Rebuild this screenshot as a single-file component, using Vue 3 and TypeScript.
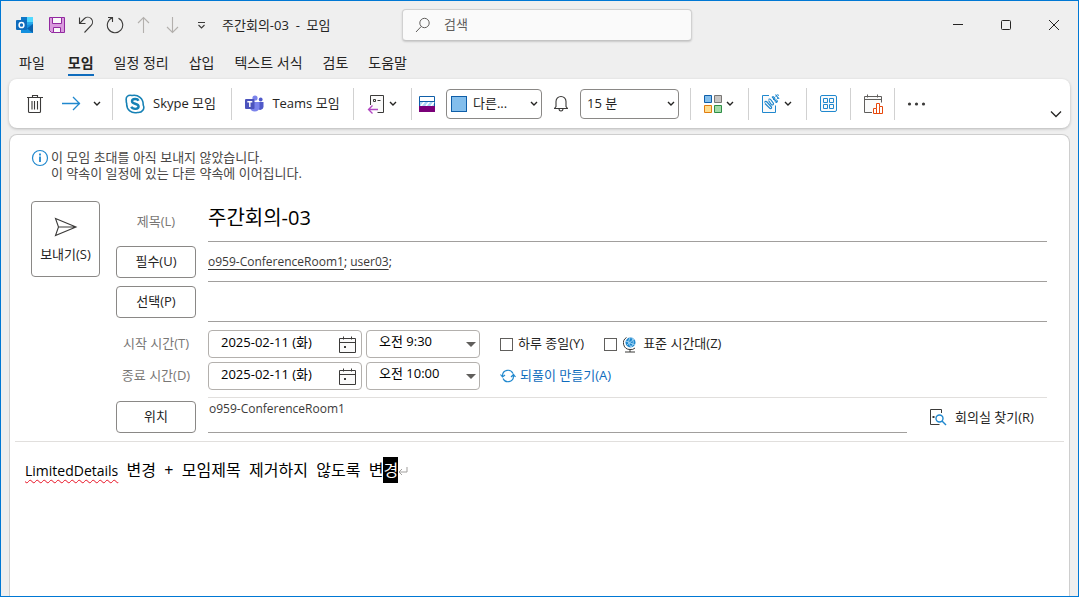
<script setup lang="ts">
import { ref } from 'vue'

const tabs = ['파일', '모임', '일정 정리', '삽입', '텍스트 서식', '검토', '도움말']
const activeTab = ref('모임')
const subject = ref('주간회의-03')
const place = ref('o959-ConferenceRoom1')
const times = ref([
  { id: 'start', label: '시작 시간(T)', date: '2025-02-11 (화)', time: '오전 9:30' },
  { id: 'end', label: '종료 시간(D)', date: '2025-02-11 (화)', time: '오전 10:00' },
])
const attendees = ['o959-ConferenceRoom1', 'user03']
const allDay = ref(false)
const timeZones = ref(false)
</script>

<template>
  <div class="window">
    <header class="titlebar">
      <div class="quick">
        <svg class="logo" width="18" height="18" viewBox="0 0 18 18">
          <path d="M5 1h12v8H5z" fill="#28a8ea" />
          <path d="M11 1h6v5h-6z" fill="#50d9ff" />
          <path d="M5 1h6v4H5z" fill="#0f78c8" />
          <path d="M5 17V9h6l6-1v9z" fill="#1490df" />
          <path d="M17 8v9l-6-4.500z" fill="#0a62ad" />
          <rect x="0" y="4" width="11" height="10" rx="1" fill="#0f6cbd" />
          <ellipse cx="5.500" cy="9" rx="2.400" ry="2.600" fill="none" stroke="#fff" stroke-width="1.500" />
        </svg>
        <button class="q save" aria-label="저장">
          <svg width="18" height="18" viewBox="0 0 18 18">
            <path d="M1.500 1.500h15v15h-13l-2-2z" fill="#d99add" stroke="#9229a0" />
            <path d="M4.500 1.500h9v6h-9z" fill="#fafafa" stroke="#9229a0" />
            <path d="M5.500 16.500v-5h7v5z" fill="#fafafa" stroke="#9229a0" />
          </svg>
        </button>
        <button class="q" aria-label="실행 취소">
          <svg width="18" height="18" viewBox="0 0 18 18" class="line">
            <path d="M2.500 1.500v6h6M2.500 7.500l5-5C9.500.800 12.500.900 14.200 2.700s1.800 4.800 0 6.800L7.500 16.500" />
          </svg>
        </button>
        <button class="q" aria-label="다시 실행">
          <svg width="18" height="18" viewBox="0 0 18 18" class="line">
            <path d="M2 1.500h4.500v4.500M6.500 1.800A7.700 7.700 0 1 0 12.500 2.200" />
          </svg>
        </button>
        <button class="q" aria-label="이전 항목">
          <svg width="18" height="18" viewBox="0 0 18 18" class="line dim"><path d="M8.500 17V1.500M3 7l5.500-5.500L14 7" /></svg>
        </button>
        <button class="q" aria-label="다음 항목">
          <svg width="18" height="18" viewBox="0 0 18 18" class="line dim"><path d="M8.500 1v15.500M3 11l5.500 5.500L14 11" /></svg>
        </button>
        <button class="q" aria-label="도구 모음 사용자 지정">
          <svg width="18" height="18" viewBox="0 0 18 18" class="line"><path d="M5 6.500h7M5.500 9l3 3 3-3" /></svg>
        </button>
        <span class="caption">주간회의-03&nbsp; -&nbsp; 모임</span>
      </div>
      <label class="search">
        <svg width="16" height="16" viewBox="0 0 16 16"><circle cx="9.500" cy="6" r="4.700" /><path d="M6.200 9.500L1 15" /></svg>
        <input type="text" placeholder="검색" aria-label="검색" />
      </label>
      <div class="controls">
        <button aria-label="최소화"><svg width="12" height="12" viewBox="0 0 12 12"><path d="M1 5.500h10" /></svg></button>
        <button aria-label="최대화"><svg width="12" height="12" viewBox="0 0 12 12"><rect x="1.500" y="1.500" width="9" height="9" rx="1" /></svg></button>
        <button aria-label="닫기"><svg width="12" height="12" viewBox="0 0 12 12"><path d="M1 1l10 10M11 1L1 11" /></svg></button>
      </div>
    </header>

    <nav class="tabs">
      <button v-for="t in tabs" :key="t" :class="{ active: t === activeTab }" @click="activeTab = t">{{ t }}</button>
    </nav>

    <section class="ribbon">
      <div class="group first">
        <button aria-label="삭제">
          <svg width="18" height="20" viewBox="0 0 18 20" class="line"><path d="M1 3.500h16M6.500 3.500v-2h5v2M2.500 3.500v14q0 1 1 1h10q1 0 1-1v-14M6 7v8.500M8.500 7v8.500M11.500 7v8.500" /></svg>
        </button>
        <button aria-label="전달" class="forward">
          <svg width="20" height="16" viewBox="0 0 20 16" class="line blue"><path d="M1 7.500h18M12 1l6.500 6.500L12 14" /></svg>
        </button>
        <button aria-label="전달 옵션"><svg class="chev" width="8" height="6" viewBox="0 0 8 6"><path d="M1 1l3 3 3-3" /></svg></button>
      </div>
      <div class="group skype">
        <button class="named">
          <svg width="20" height="20" viewBox="0 0 20 20">
            <path d="M1.300 6.500C.500 3 3.200.300 7 1.500c6-1.300 11.500 3 11.200 9.500 1.800 3.500-.800 8-5.700 7.500C6.500 19.800 1.300 16 1.700 9.500 1.300 8.500 1.200 7.500 1.300 6.500z" fill="#fff" stroke="#1681b5" stroke-width="1.600" />
            <path d="M13.500 6.700C12.500 4.300 7 4.500 7 7.300c0 3.200 6.600 1.700 6.600 5.200 0 3-5.900 3.200-7.300.3" fill="none" stroke="#1681b5" stroke-width="2.400" />
          </svg>
          <span>Skype 모임</span>
        </button>
      </div>
      <div class="group teams">
        <button class="named">
          <svg width="19" height="18" viewBox="0 0 19 18">
            <circle cx="15.700" cy="4.500" r="1.900" fill="#5059c9" />
            <circle cx="10" cy="3" r="2.600" fill="#7b83eb" />
            <path d="M12 7h6.500v5a3.300 3.300 0 0 1-6 1.500z" fill="#5059c9" />
            <path d="M5 7h9.500v5.500a4.800 4.800 0 0 1-9.500 0z" fill="#7b83eb" />
            <rect x="0" y="4" width="9.500" height="10" rx="1" fill="#4b53bc" />
            <path d="M2.300 6.800h5M4.800 6.800V12" stroke="#fff" stroke-width="1.400" />
          </svg>
          <span>Teams 모임</span>
        </button>
      </div>
      <div class="group">
        <button class="menu" aria-label="응답 옵션">
          <svg width="18" height="20" viewBox="0 0 18 20" fill="none">
            <path d="M3.500 11V1.500h13v17h-6" stroke="#3b3a39" fill="#fafafa" />
            <path d="M6.500 5.500h2v2h-2zM10.500 6.500h3" stroke="#3b3a39" />
            <path d="M11 15.500H1.500M5.500 11.500l-4 4 4 4" stroke="#b146c2" stroke-width="1.300" />
          </svg>
          <svg class="chev" width="8" height="6" viewBox="0 0 8 6"><path d="M1 1l3 3 3-3" /></svg>
        </button>
      </div>
      <div class="group options">
        <svg width="16" height="16" viewBox="0 0 16 16">
          <path d="M.500.500h15v10H.500z" fill="#fff" stroke="#0f5ea8" />
          <path d="M1 5h14v5H1z" fill="#a9d8f5" />
          <path d="M2 10l4-5M7 10l4-5M12 10l3-4" stroke="#fff" stroke-width="1.500" />
          <path d="M.500 5.500h15" stroke="#0f5ea8" />
          <path d="M0 10h16v6H0z" fill="#7a0078" />
        </svg>
        <div class="pick busy">
          <span class="swatch"></span>
          <select aria-label="상태"><option>다른...</option></select>
          <svg class="chev" width="8" height="6" viewBox="0 0 8 6"><path d="M1 1l3 3 3-3" /></svg>
        </div>
        <svg width="14" height="18" viewBox="0 0 14 18" class="line bell"><path d="M.500 13.500h13l-1.500-2V6.500a5 5 0 0 0-10 0v5zM5 13.500q0 2.500 2 2.500t2-2.500" /></svg>
        <div class="pick remind">
          <select aria-label="미리 알림"><option>15 분</option></select>
          <svg class="chev" width="8" height="6" viewBox="0 0 8 6"><path d="M1 1l3 3 3-3" /></svg>
        </div>
      </div>
      <div class="group">
        <button class="menu" aria-label="범주">
          <svg width="18" height="18" viewBox="0 0 18 18">
            <path d="M.500.500h7v7h-7z" fill="#83beec" stroke="#0f5ea8" />
            <path d="M10.500.500h7v7h-7z" fill="#c8c6c4" stroke="#797775" />
            <path d="M.500 10.500h7v7h-7z" fill="#ffdd8f" stroke="#e07c10" />
            <path d="M10.500 10.500h7v7h-7z" fill="#a2dba8" stroke="#2f8d46" />
          </svg>
          <svg class="chev" width="8" height="6" viewBox="0 0 8 6"><path d="M1 1l3 3 3-3" /></svg>
        </button>
      </div>
      <div class="group">
        <button class="menu" aria-label="잉크">
          <svg width="19" height="20" viewBox="0 0 19 20" fill="none" stroke="#2088ce">
            <path d="M8 1.500H1.500v17h13v-7" fill="#fafafa" />
            <path d="M3.500 8.500q1-2 2.500-.500l4.500 5q.500 2-1.500 1.500L4 9.500M7.500 5.500q1.200-1.200 2.500.500l2.500 3.500q0 2-2 1.300L7.500 6.500M11 2.500l5 6M14.500.500l3 4" stroke-width="1.200" />
            <path d="M11 4q2-3 3 0 0 2-2 1.500M13.500 7q2.500-2.500 3 0 0 2-2 1.500M14.500 2.500q2.500-3 3.500-1M16 4.500q2-1.500 2 .500" />
          </svg>
          <svg class="chev" width="8" height="6" viewBox="0 0 8 6"><path d="M1 1l3 3 3-3" /></svg>
        </button>
      </div>
      <div class="group small">
        <button aria-label="앱">
          <svg width="18" height="18" viewBox="0 0 18 18" fill="#fafafa" stroke="#2088ce">
            <rect x=".500" y=".500" width="16" height="16" rx="1.500" />
            <path d="M3.500 3.500h4v4h-4zM9.500 3.500h4v4h-4zM3.500 9.500h4v4h-4zM9.500 9.500h4v4h-4z" />
          </svg>
        </button>
      </div>
      <div class="group small">
        <button aria-label="일정 설문">
          <svg width="20" height="20" viewBox="0 0 20 20" fill="none">
            <path d="M9 18.500H1.500v-16h17v6" stroke="#605e5c" fill="#fafafa" />
            <path d="M1.500 5.500h17M4.500.500v3M14.500.500v3" stroke="#605e5c" />
            <path d="M10.500 19.500v-5h3v-5h3v3h3v7zM13.500 14.500v5M16.500 12.500v7" stroke="#e8480c" fill="#fff" />
          </svg>
        </button>
      </div>
      <div class="group small last">
        <button aria-label="기타 명령">
          <svg width="20" height="4" viewBox="0 0 20 4" fill="#3b3a39"><circle cx="2.500" cy="2" r="1.600" /><circle cx="9.500" cy="2" r="1.600" /><circle cx="16.500" cy="2" r="1.600" /></svg>
        </button>
      </div>
      <button class="collapse" aria-label="리본 축소">
        <svg width="12" height="8" viewBox="0 0 12 8"><path d="M1 1.500l5 5 5-5" /></svg>
      </button>
    </section>

    <main class="card">
      <div class="notice">
        <svg width="18" height="18" viewBox="0 0 18 18" fill="none" stroke="#2088ce"><circle cx="9" cy="9" r="7.500" stroke-width="1.200" /><path d="M9 7.500V13M9 4.500v2" stroke-width="1.800" /></svg>
        <div>
          <p>이 모임 초대를 아직 보내지 않았습니다.</p>
          <p>이 약속이 일정에 있는 다른 약속에 이어집니다.</p>
        </div>
      </div>

      <form class="form" @submit.prevent>
        <button class="box send">
          <svg width="24" height="20" viewBox="0 0 24 20" class="line"><path d="M1.500 1.500L22 10 1.500 18.500 4.500 10zM4.500 10H22" /></svg>
          보내기(S)
        </button>
        <div class="rows">
          <div class="row subject">
            <label class="name" for="subject">제목(L)</label>
            <input id="subject" v-model="subject" class="field" />
          </div>
          <div class="row">
            <button type="button" class="box name">필수(U)</button>
            <div class="field people">
              <template v-for="a in attendees" :key="a"><a href="#">{{ a }}</a>;&#32;</template>
            </div>
          </div>
          <div class="row">
            <button type="button" class="box name">선택(P)</button>
            <input class="field" aria-label="선택 참석자" />
          </div>
          <div class="times">
            <div v-for="t in times" :key="t.id" class="time-row">
              <label class="name" :for="t.id">{{ t.label }}</label>
              <div class="date">
                <input :id="t.id" v-model="t.date" />
                <svg width="17" height="17" viewBox="0 0 17 17" fill="#fafafa" stroke="#3b3a39"><path d="M.500 2.500h16v14H.500zM.500 6.500h16M4.500.500v3M12.500.500v3" /><path d="M5 10h2v2H5z" fill="#3b3a39" stroke="none" /></svg>
              </div>
              <div class="clock">
                <select :aria-label="t.label"><option>{{ t.time }}</option></select>
                <svg width="10" height="5" viewBox="0 0 10 5"><path d="M0 0h10L5 5z" fill="#605e5c" /></svg>
              </div>
              <template v-if="t.id === 'start'">
                <label class="check"><input v-model="allDay" type="checkbox" /><span>하루 종일(Y)</span></label>
                <label class="check zone">
                  <input v-model="timeZones" type="checkbox" />
                  <svg width="14" height="17" viewBox="0 0 14 17" fill="none">
                    <circle cx="7.500" cy="6.500" r="5" fill="#2088ce" />
                    <path d="M3 5l9 4M4 9l7-6M7 2q-3 4 1 9M9 2q3 5-1 9" stroke="#9fd4f5" />
                    <path d="M3.500 1.500A6.500 6.500 0 0 0 7 13.500q3 .500 5-1.500M7 13.500v2.500M2 16h10" stroke="#3b3a39" />
                  </svg>
                  <span>표준 시간대(Z)</span>
                </label>
              </template>
              <a v-else class="recur" href="#">
                <svg width="16" height="14" viewBox="0 0 16 14" fill="none" stroke="#2088ce" stroke-width="1.200"><path d="M2.500 8V6.500a5.500 5.500 0 0 1 10.500-2M13.500 6v1.500a5.500 5.500 0 0 1-10.500 2M.500 5.500l2 2.500 2.500-2M11 8l2.500-2.500 2 2.500" /></svg>
                <span>되풀이 만들기(A)</span>
              </a>
            </div>
          </div>
          <div class="row place">
            <button type="button" class="box name">위치</button>
            <div class="place-area">
              <input v-model="place" aria-label="위치" />
              <button type="button" class="find">
                <svg width="18" height="18" viewBox="0 0 18 18" fill="none">
                  <path d="M12.500 5V1.500h-11v15h9" stroke="#3b3a39" />
                  <path d="M3.500 8h2v2h-2z" fill="#3b3a39" />
                  <circle cx="10.500" cy="10.500" r="3.500" stroke="#2088ce" stroke-width="1.400" fill="#fff" />
                  <path d="M13 13l4 4" stroke="#2088ce" stroke-width="1.500" />
                </svg>
                회의실 찾기(R)
              </button>
            </div>
          </div>
        </div>
      </form>

      <div class="editor" contenteditable="true" spellcheck="false" role="textbox" aria-label="본문"><span class="typo">LimitedDetails</span>&nbsp; 변경&nbsp; +&nbsp; 모임제목&nbsp; 제거하지&nbsp; 않도록&nbsp; 변<span class="selected">경</span><svg width="10" height="9" viewBox="0 0 10 9"><path d="M9 0v5H1M4 2L1 5l3 3" /></svg></div>
    </main>
  </div>
</template>

<style>
html,
body {
  margin: 0;
  background: #efefef;
}
</style>

<style scoped>
.window {
  box-sizing: border-box;
  min-height: 100vh;
  display: flex;
  flex-direction: column;
  border: 1px solid #0078d4;
  background: #efefef;
  color: #252423;
  font: 13px/16px "Open Sans", "Noto Sans CJK KR", sans-serif;
}
.window * {
  box-sizing: border-box;
}
button,
input,
select {
  margin: 0;
  padding: 0;
  border: 0;
  background: none;
  color: inherit;
  font: inherit;
  outline: 0;
  border-radius: 0;
  appearance: none;
}
button {
  white-space: nowrap;
}
svg {
  display: block;
  flex: none;
}
.line {
  fill: none;
  stroke: #3b3a39;
  stroke-width: 1.1;
}
.line.dim {
  stroke: #b3b0ad;
}
.line.blue {
  stroke: #2088ce;
  stroke-width: 1.3;
}
.chev {
  fill: none;
  stroke: #252423;
  stroke-width: 1.4;
}

.titlebar {
  display: grid;
  grid-template-columns: 1fr 290px 1fr;
  align-items: center;
  height: 48px;
  padding-left: 15px;
}
.quick {
  display: flex;
  align-items: center;
  white-space: nowrap;
}
.q {
  display: grid;
  place-items: center;
  width: 29px;
  height: 24px;
}
.q.save {
  margin-left: 8px;
}
.caption {
  margin-left: 6px;
}
.search {
  display: flex;
  align-items: center;
  gap: 13px;
  height: 32px;
  padding: 0 12px;
  border: 1px solid #d1d1d1;
  border-bottom-color: #c4c4c4;
  border-radius: 4px;
  background: #fafafa;
  box-shadow: 0 1px 2px rgba(0, 0, 0, 0.16);
  fill: none;
  stroke: #605e5c;
}
.search input {
  flex: 1;
  min-width: 0;
  padding-bottom: 2px;
}
.search input::placeholder {
  color: #605e5c;
  opacity: 1;
}
.controls {
  display: flex;
  justify-content: flex-end;
}
.controls button {
  display: grid;
  place-items: center;
  width: 48px;
  height: 32px;
  fill: none;
  stroke: #252423;
}

.tabs {
  display: flex;
  gap: 20px;
  height: 30px;
  padding-left: 18px;
  font-size: 14px;
}
.tabs button {
  height: 27px;
  padding-top: 3px;
  border-bottom: 2px solid transparent;
}
.tabs .active {
  margin-left: 3px;
  border-bottom-color: #0f6cbd;
  font-weight: 700;
}

.ribbon {
  display: flex;
  align-items: center;
  height: 49px;
  margin: 0 8px;
  border-radius: 8px;
  background: #fff;
  box-shadow: 0 1px 3px rgba(0, 0, 0, 0.24);
}
.group {
  display: flex;
  align-items: center;
  justify-content: center;
  height: 32px;
  border-right: 1px solid #d1d1d1;
  flex: 0 0 58px;
}
.group.first {
  flex-basis: 104px;
  justify-content: flex-start;
  padding-left: 17px;
}
.forward {
  margin: 0 12px 0 17px;
}
.group.skype {
  flex-basis: 119px;
  justify-content: flex-start;
  padding-left: 12px;
}
.group.teams {
  flex-basis: 122px;
}
.named,
.menu {
  display: flex;
  align-items: center;
  gap: 8px;
}
.named span,
.check span,
.recur span {
  padding-bottom: 2px;
}
.menu {
  gap: 4px;
  margin-right: 2px;
}
.group.options {
  flex-basis: 279px;
  justify-content: flex-start;
  padding-left: 7px;
}
.group.small {
  flex-basis: 44px;
}
.group.last {
  border: 0;
}
.pick {
  position: relative;
  display: flex;
  align-items: center;
  height: 30px;
  border: 1px solid #8a8886;
  border-radius: 4px;
}
.busy {
  width: 96px;
  margin: 0 12px 0 11px;
  padding-left: 4px;
}
.remind {
  width: 99px;
  margin-left: 12px;
  padding-left: 6px;
}
.pick select {
  flex: 1;
  min-width: 0;
  height: 28px;
  padding-bottom: 2px;
}
.pick .chev {
  margin: 0 3px;
}
.swatch {
  width: 16px;
  height: 16px;
  margin-right: 6px;
  border: 1px solid #0f5ea8;
  background: #83beec;
}
.collapse {
  align-self: flex-end;
  margin: 0 8px 10px auto;
  fill: none;
  stroke: #252423;
  stroke-width: 1.3;
}

.card {
  flex: 1;
  margin: 6px 8px 0;
  padding-top: 14px;
  border: 1px solid #cecece;
  border-bottom: 0;
  border-radius: 8px 8px 0 0;
  background: #fff;
}
.notice {
  display: flex;
  gap: 2px;
  padding-left: 21px;
  color: #484644;
}
.notice p {
  margin: 0;
}
.form {
  display: flex;
  gap: 16px;
  margin: 20px 5px 0;
  padding: 0 17px 8px 16px;
  border-bottom: 1px solid #e1dfdd;
}
.box {
  border: 1px solid #8a8886;
  border-radius: 4px;
  background: #fff;
}
.send {
  display: flex;
  flex: none;
  flex-direction: column;
  align-items: center;
  justify-content: center;
  gap: 9px;
  width: 69px;
  height: 76px;
}
.rows {
  flex: 1;
  min-width: 0;
}
.row {
  display: flex;
  align-items: center;
  gap: 12px;
  height: 40px;
}
.name {
  flex: none;
  width: 80px;
  padding-bottom: 2px;
  text-align: center;
}
label.name {
  color: #797775;
}
.box.name {
  height: 32px;
}
.field {
  flex: 1;
  min-width: 0;
  height: 100%;
  border-bottom: 1px solid #a19f9d;
}
.subject {
  height: 41px;
}
.subject .field {
  padding-bottom: 10px;
  color: #000;
  font-size: 20px;
  line-height: 28px;
}
.people {
  padding-top: 12px;
  font-size: 12px;
}
.people a {
  color: #3b3a39;
  text-underline-offset: 3px;
}
.times {
  display: flex;
  flex-direction: column;
  gap: 4px;
  padding: 8px 0 7px;
}
.time-row {
  display: flex;
  align-items: center;
  height: 28px;
  white-space: nowrap;
}
.date,
.clock {
  display: flex;
  align-items: center;
  height: 28px;
  border: 1px solid #b3b0ad;
  border-radius: 4px;
  color: #000;
}
.date {
  width: 154px;
  margin: 0 4px 0 12px;
  padding: 0 5px 0 12px;
}
.clock {
  width: 114px;
  margin-right: 20px;
  padding: 0 3px 0 12px;
}
.date input,
.clock select {
  flex: 1;
  min-width: 0;
  height: 26px;
  padding-bottom: 6px;
}
.check {
  display: flex;
  align-items: center;
  gap: 5px;
}
.check input {
  width: 13px;
  height: 13px;
  border: 1px solid #605e5c;
  background: #fff;
}
.zone {
  gap: 6px;
  margin-left: 20px;
}
.recur {
  display: flex;
  align-items: center;
  gap: 4px;
  color: #0f6cbd;
  text-decoration: none;
}
.place {
  align-items: flex-end;
  height: 36px;
}
.place-area {
  flex: 1;
  display: flex;
  height: 36px;
  border-top: 1px solid #e1dfdd;
}
.place-area input {
  flex: 1;
  min-width: 0;
  padding: 0 1px 12px;
  border-bottom: 1px solid #a19f9d;
  color: #3b3a39;
  font-size: 12px;
}
.find {
  display: flex;
  align-items: center;
  gap: 8px;
  width: 140px;
  padding: 2px 0 0 22px;
}
.editor {
  padding: 15px 15px 0;
  color: #000;
  font-size: 16px;
  line-height: 26px;
  outline: 0;
}
.typo {
  font-size: 14px;
  text-decoration: underline wavy #e81123 1px;
  text-underline-offset: 3px;
}
.selected {
  display: inline-block;
  background: #000;
  color: #fff;
}
.editor svg {
  display: inline-block;
  fill: none;
  stroke: #a19f9d;
}
</style>
